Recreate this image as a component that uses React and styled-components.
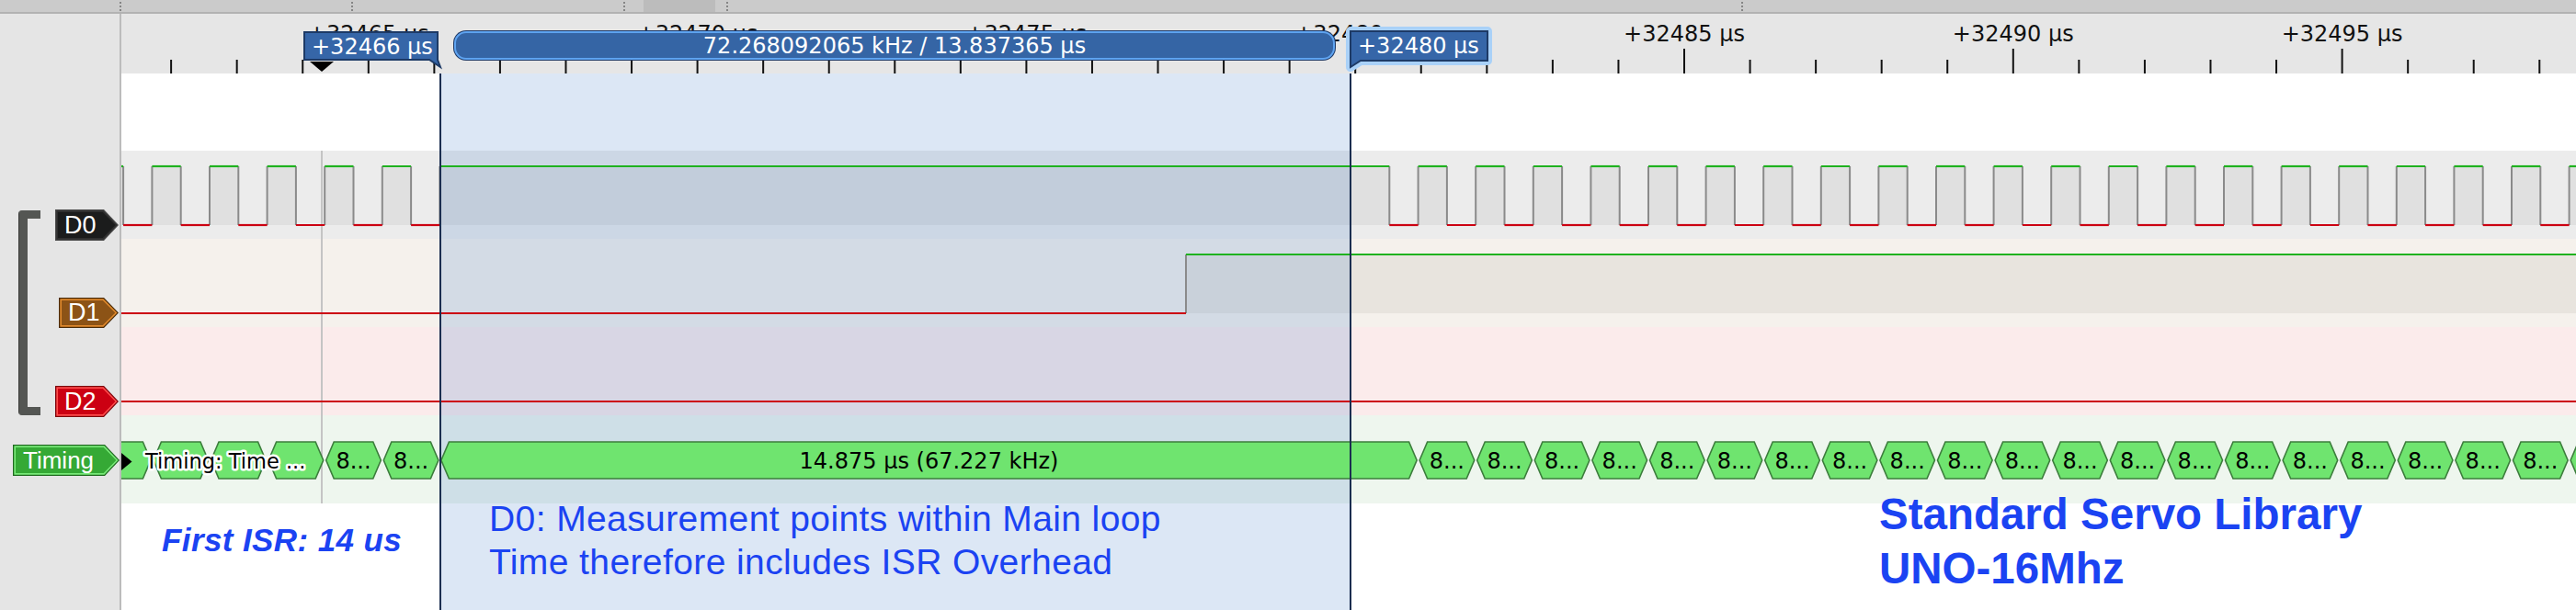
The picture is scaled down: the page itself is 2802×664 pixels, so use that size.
import React from "react";
import styled, { createGlobalStyle } from "styled-components";

const OFF = 132;
const W = 2802 - OFF;
const PX_PER_US = 71.56;
const T0 = 32465;
const X0 = 400.8 - OFF;
const xAt = (t) => X0 + (t - T0) * PX_PER_US;
const PERIOD = 62.6;
const HALF = 31.3;
const R0 = 478.4 - OFF;
const HY = 17;
const LY = 81;

const GlobalStyle = createGlobalStyle`
  html, body { margin: 0; padding: 0; background: #fff; }
  body { font-family: "Liberation Sans", Arial, sans-serif; }
  #root { width: 2802px; height: 664px; }
`;

const Page = styled.div`
  width: 2802px;
  height: 664px;
  overflow: hidden;
  display: flex;
  flex-direction: column;
  background: #fff;
`;

const TopBar = styled.div`
  height: 13px;
  flex: none;
  background: #cbcbcb;
  border-bottom: 2px solid #b2b2b2;
  display: flex;
`;

const BarSeg = styled.div`
  width: ${(p) => (p.$w ? `${p.$w}px` : "auto")};
  flex: ${(p) => (p.$w ? "none" : "1")};
  background: ${(p) => (p.$thumb ? "#bcbcbc" : "transparent")};
`;

const BarDots = styled.div`
  width: 0;
  height: 10px;
  margin-top: 2px;
  border-left: 2px dotted #858585;
`;

const Body = styled.div`
  flex: 1;
  display: flex;
  min-height: 0;
`;

const SidePanel = styled.div`
  width: 130px;
  flex: none;
  background: #e5e5e5;
  border-right: 2px solid #bcbcbc;
  display: flex;
  flex-direction: column;
`;

const PanelSpacer = styled.div`
  height: 149px;
  flex: none;
`;

const ChannelGroup = styled.div`
  display: grid;
  grid-template-columns: 60px 70px;
  grid-template-rows: repeat(3, 96px);
`;

const Bracket = styled.div`
  grid-column: 1;
  grid-row: 1 / span 3;
  margin: 65px 0 0 21px;
  width: 23px;
  height: 223px;
  box-sizing: border-box;
  border: 9px solid #545653;
  border-right: 0;
  border-radius: 4px 0 0 4px;
  box-shadow: -1px 0 0 #3a3b39;
`;

const LabelCell = styled.div`
  grid-column: 2;
  display: flex;
  justify-content: flex-end;
  align-items: flex-start;
  padding-top: 64px;
  padding-right: 1px;
`;

const TimingCell = styled.div`
  height: 96px;
  display: flex;
  justify-content: flex-end;
  align-items: flex-start;
  padding-top: 32px;
  box-sizing: border-box;
`;

const TagBox = styled.div`
  position: relative;
  width: ${(p) => p.$w}px;
  height: ${(p) => p.$h}px;
  display: flex;
  align-items: center;
  padding-left: ${(p) => p.$pad}px;
  box-sizing: border-box;
`;

const TagShape = styled.svg`
  position: absolute;
  left: 0;
  top: 0;
`;

const TagText = styled.span`
  position: relative;
  color: #fff;
  font-family: "Liberation Sans", Arial, sans-serif;
  font-size: ${(p) => p.$size}px;
  line-height: 1;
`;

const poly = (w, h, t, d) =>
  `${d},${d} ${w - t - d * 0.4},${d} ${w - d * 1.2},${h / 2} ${w - t - d * 0.4},${h - d} ${d},${h - d}`;

function Tag({ label, w, h, colors, size = 27, pad = 10 }) {
  const [outer, mid, inner] = colors;
  return (
    <TagBox $w={w} $h={h} $pad={pad}>
      <TagShape width={w} height={h}>
        <polygon points={poly(w, h, 16, 0)} fill={outer} />
        <polygon points={poly(w, h, 16, 1.3)} fill={mid} />
        <polygon points={poly(w, h, 16, 3)} fill={inner} />
      </TagShape>
      <TagText $size={size}>{label}</TagText>
    </TagBox>
  );
}

const Canvas = styled.div`
  flex: 1;
  min-width: 0;
  position: relative;
  display: flex;
  flex-direction: column;
`;

const Ruler = styled.div`
  height: 65px;
  flex: none;
  position: relative;
  background: #e6e6e6;
`;

const RulerSvg = styled.svg`
  position: absolute;
  left: 0;
  top: 0;
`;

const RulerLabel = styled.span`
  position: absolute;
  top: 10px;
  transform: translateX(-50%);
  font-family: "DejaVu Sans", sans-serif;
  font-size: 24px;
  line-height: 24px;
  color: #111;
  white-space: nowrap;
`;

const MarkerBox = styled.div`
  position: absolute;
  left: ${(p) => p.$x}px;
  top: ${(p) => p.$y}px;
  width: ${(p) => p.$w}px;
  height: ${(p) => p.$h}px;
`;

const MarkerShape = styled.svg`
  position: absolute;
  left: 0;
  top: 0;
  overflow: visible;
`;

const MarkerText = styled.span`
  position: absolute;
  left: ${(p) => p.$tx}px;
  top: ${(p) => p.$ty}px;
  font-family: "DejaVu Sans", sans-serif;
  font-size: 24px;
  line-height: 32px;
  color: #fff;
  white-space: nowrap;
`;

const MeasureBar = styled.div`
  position: absolute;
  left: 362px;
  top: 19px;
  width: 958px;
  height: 31px;
  box-sizing: border-box;
  border-radius: 13px;
  background: #3565a5;
  border: 2px solid #5ea3f0;
  box-shadow: 0 0 0 1px #1e3966;
  display: flex;
  align-items: center;
  justify-content: center;
  font-family: "DejaVu Sans", sans-serif;
  font-size: 24px;
  color: #fff;
  white-space: nowrap;
`;

const WhiteStrip = styled.div`
  height: 84px;
  flex: none;
  background: #fff;
`;

const SignalRow = styled.div`
  height: 96px;
  flex: none;
  display: grid;
  background: ${(p) => p.$bg};
`;

const FillLayer = styled.svg`
  display: block;
  grid-area: 1 / 1;
`;

const LineLayer = styled.svg`
  display: block;
  grid-area: 1 / 1;
  position: relative;
  z-index: 2;
`;

const Notes = styled.div`
  flex: 1;
  background: #fff;
`;

const SelectionTint = styled.div`
  position: absolute;
  z-index: 1;
  left: 346px;
  top: 65px;
  bottom: 0;
  width: 992px;
  background: rgba(60, 120, 200, 0.18);
  pointer-events: none;
`;

const SelectionFrame = styled.div`
  position: absolute;
  z-index: 3;
  left: 346px;
  top: 65px;
  bottom: 0;
  width: 992px;
  box-sizing: border-box;
  border-left: 2px solid #1b2e50;
  border-right: 2px solid #1b2e50;
  pointer-events: none;
`;

const Cursor = styled.div`
  position: absolute;
  z-index: 1;
  left: 217px;
  top: 149px;
  width: 2px;
  height: 384px;
  background: #c4c4c4;
`;

const Annotation = styled.div`
  position: absolute;
  z-index: 4;
  left: ${(p) => p.$x}px;
  top: ${(p) => p.$y}px;
  font-family: "Liberation Sans", Arial, sans-serif;
  font-size: ${(p) => p.$size}px;
  line-height: ${(p) => p.$lh}px;
  font-weight: ${(p) => (p.$bold ? 700 : 400)};
  font-style: ${(p) => (p.$italic ? "italic" : "normal")};
  letter-spacing: ${(p) => p.$ls || 0}px;
  color: #1b43f2;
  white-space: nowrap;
`;

const HexLabel = styled.text`
  font-family: "DejaVu Sans", sans-serif;
  font-size: 24px;
  fill: #000;
`;

const NameLabel = styled.text`
  font-family: "DejaVu Sans", sans-serif;
  font-size: 22.5px;
  fill: #000;
  stroke: #fff;
  stroke-width: 5px;
  stroke-linejoin: round;
  paint-order: stroke fill;
`;

function buildIntervals(edges) {
  const out = [];
  let level = 0;
  let x = 0;
  for (const [ex, lv] of edges) {
    if (ex <= 0) {
      level = lv;
      continue;
    }
    if (ex >= W) break;
    out.push({ a: x, b: ex, high: level === 1 });
    x = ex;
    level = lv;
  }
  out.push({ a: x, b: W, high: level === 1 });
  return out;
}

const d0Edges = (() => {
  const e = [];
  for (let k = -6; k < 45; k++) {
    const r = R0 + k * PERIOD;
    const f = r + HALF;
    if (!(k >= 1 && k <= 16)) e.push([r, 1]);
    if (!(k >= 0 && k <= 15)) e.push([f, 0]);
  }
  return e.sort((a, b) => a[0] - b[0]);
})();

const d1Edges = [[1290 - OFF, 1]];
const d2Edges = [];

function WaveRow({ bg, edges, fill }) {
  const ivs = buildIntervals(edges);
  const inside = edges.filter(([x]) => x > 0 && x < W);
  return (
    <SignalRow $bg={bg}>
      <FillLayer width={W} height={96}>
        {ivs
          .filter((i) => i.high)
          .map((i, n) => (
            <rect key={`f${n}`} x={i.a} y={HY} width={i.b - i.a} height={LY - HY} fill={fill} />
          ))}
      </FillLayer>
      <LineLayer width={W} height={96}>
        {inside.map(([x], n) => (
          <line key={`e${n}`} x1={x} x2={x} y1={HY} y2={LY} stroke="#8a8a8a" strokeWidth="2" />
        ))}
        {ivs.map((i, n) => (
          <line
            key={`l${n}`}
            x1={i.a}
            x2={i.b}
            y1={i.high ? HY : LY}
            y2={i.high ? HY : LY}
            stroke={i.high ? "#1fb21f" : "#cc0012"}
            strokeWidth="2.2"
          />
        ))}
      </LineLayer>
    </SignalRow>
  );
}

const hexBounds = (() => {
  const b = [];
  for (let k = -6; k <= 0; k++) b.push(R0 + k * PERIOD);
  for (let k = 17; R0 + k * PERIOD < W + PERIOD; k++) b.push(R0 + k * PERIOD);
  return b;
})();

const hexPts = (a, b) =>
  `${a + 1.5},49 ${a + 10},29 ${b - 10},29 ${b - 1.5},49 ${b - 10},69 ${a + 10},69`;

function TimingRow() {
  const hexes = hexBounds.slice(0, -1).map((a, i) => ({ a, b: hexBounds[i + 1], i }));
  return (
    <SignalRow $bg="#eef6ee">
      <LineLayer width={W} height={96}>
        {hexes.map(({ a, b, i }) => (
          <polygon key={`h${i}`} points={hexPts(a, b)} fill="#6fe46f" stroke="#3c7d3c" strokeWidth="1.6" />
        ))}
        {hexes.map(({ a, b, i }) => {
          if (i < 4) return null;
          const txt = i === 6 ? "14.875 µs (67.227 kHz)" : "8...";
          return (
            <HexLabel key={`t${i}`} x={(a + b) / 2} y={58} textAnchor="middle">
              {txt}
            </HexLabel>
          );
        })}
        <polygon points="0,41 11.5,50.5 0,60" fill="#000" />
        <NameLabel x={26} y={58}>
          Timing: Time ...
        </NameLabel>
      </LineLayer>
    </SignalRow>
  );
}

function RulerTicks() {
  const ticks = [];
  for (let t = 32462; t <= 32498; t++) {
    const x = xAt(t);
    const major = t % 5 === 0;
    ticks.push(<line key={t} x1={x} x2={x} y1={major ? 38 : 50} y2={65} stroke="#111" strokeWidth="2" />);
  }
  return (
    <RulerSvg width={W} height={65}>
      {ticks}
    </RulerSvg>
  );
}

const rulerLabels = [32465, 32470, 32475, 32480, 32485, 32490, 32495];

export default function App() {
  return (
    <>
      <GlobalStyle />
      <Page>
        <TopBar>
          <BarSeg $w={130} />
          <BarDots />
          <BarSeg $w={250} />
          <BarDots />
          <BarSeg $w={294} />
          <BarDots />
          <BarSeg $w={20} />
          <BarSeg $w={78} $thumb />
          <BarSeg $w={12} />
          <BarDots />
          <BarSeg $w={1102} />
          <BarDots />
          <BarSeg />
        </TopBar>
        <Body>
          <SidePanel>
            <PanelSpacer />
            <ChannelGroup>
              <Bracket />
              <LabelCell>
                <Tag label="D0" w={69} h={34} colors={["#4a4a4a", "#2e2e2e", "#1b1c1c"]} />
              </LabelCell>
              <LabelCell>
                <Tag label="D1" w={65} h={33} colors={["#4a2a06", "#e0892c", "#8c5316"]} />
              </LabelCell>
              <LabelCell>
                <Tag label="D2" w={69} h={34} colors={["#7d0009", "#ff4b4b", "#cc0012"]} />
              </LabelCell>
            </ChannelGroup>
            <TimingCell>
              <Tag label="Timing" w={116} h={34} size={26} pad={11} colors={["#1e6a1e", "#78ea78", "#35a935"]} />
            </TimingCell>
          </SidePanel>
          <Canvas>
            <Ruler>
              <RulerTicks />
              {rulerLabels.map((t) => (
                <RulerLabel key={t} style={{ left: xAt(t) }}>
                  +{t} µs
                </RulerLabel>
              ))}
              <RulerSvg width={W} height={65}>
                <polygon points="205,52 231,52 218,63" fill="#000" />
              </RulerSvg>
              <MarkerBox $x={198} $y={19} $w={150} $h={40}>
                <MarkerShape width={150} height={40}>
                  <path d="M1 1 H146 V31 L149 39 L137 31 H1 Z" fill="#3666a8" stroke="#1d3a66" strokeWidth="2" />
                </MarkerShape>
                <MarkerText $tx={9} $ty={1}>+32466 µs</MarkerText>
              </MarkerBox>
              <MeasureBar>72.268092065 kHz / 13.837365 µs</MeasureBar>
              <MarkerBox $x={1329} $y={12} $w={166} $h={50}>
                <MarkerShape width={166} height={50}>
                  <path d="M8 7 H157 V39 H19 L8 46 Z" fill="#a9d1f8" stroke="#a9d1f8" strokeWidth="10" strokeLinejoin="round" />
                  <path d="M8 7 H157 V39 H19 L8 46 Z" fill="#3666a8" stroke="#1d3a66" strokeWidth="2" />
                </MarkerShape>
                <MarkerText $tx={16} $ty={7}>+32480 µs</MarkerText>
              </MarkerBox>
            </Ruler>
            <WhiteStrip />
            <WaveRow bg="#ececec" edges={d0Edges} fill="#e0e0e0" />
            <WaveRow bg="#f5f1ec" edges={d1Edges} fill="#e8e4de" />
            <WaveRow bg="#fbebeb" edges={d2Edges} fill="#eedddd" />
            <TimingRow />
            <Notes />
            <Cursor />
            <SelectionTint />
            <SelectionFrame />
            <Annotation $x={44} $y={553} $size={35} $lh={40} $bold $italic $ls={0.4}>
              First ISR: 14 us
            </Annotation>
            <Annotation $x={400} $y={526} $size={39} $lh={47} $ls={0.4}>
              D0: Measurement points within Main loop
              <br />
              Time therefore includes ISR Overhead
            </Annotation>
            <Annotation $x={1912} $y={515} $size={47.5} $lh={59} $bold>
              Standard Servo Library
              <br />
              UNO-16Mhz
            </Annotation>
          </Canvas>
        </Body>
      </Page>
    </>
  );
}
